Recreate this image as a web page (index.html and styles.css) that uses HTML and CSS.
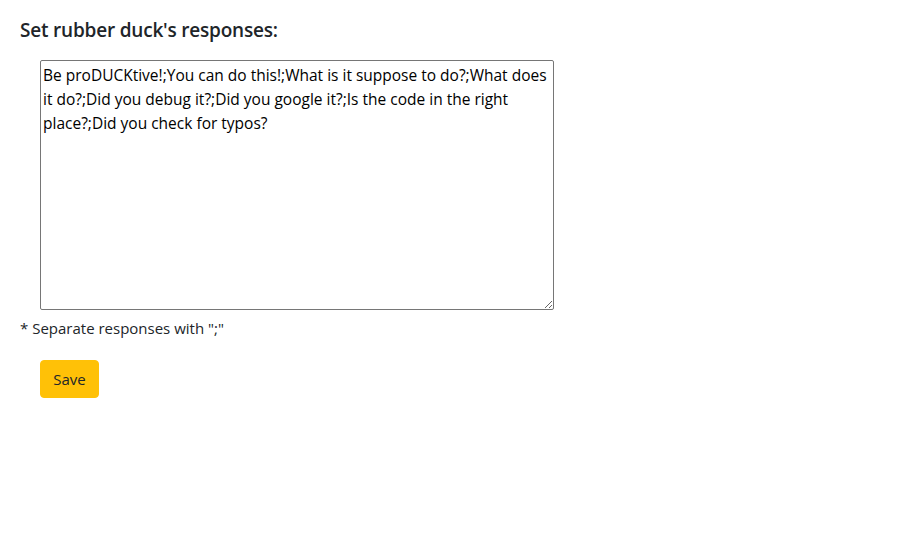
FILE: index.html
```html
<!DOCTYPE html>
<html>
<head>
<meta charset="utf-8">
<link rel="stylesheet" href="styles.css">
</head>
<body>
<div class="page">
  <h5 class="title">Set rubber duck's responses:</h5>
  <div class="field">
    <textarea class="responses">Be proDUCKtive!;You can do this!;What is it suppose to do?;What does it do?;Did you debug it?;Did you google it?;Is the code in the right place?;Did you check for typos?</textarea>
  </div>
  <p class="hint">* Separate responses with ";"</p>
  <div class="actions">
    <button class="save">Save</button>
  </div>
</div>
</body>
</html>
```
FILE: styles.css
```css
html, body {
  margin: 0;
  padding: 0;
  background: #fff;
}
body {
  font-family: "Open Sans", sans-serif;
  color: #212529;
  font-size: 16px;
}
.page {
  padding: 18px 20px;
}
.title {
  margin: 0 0 18px 0;
  font-size: 19px;
  font-weight: 600;
  line-height: 24px;
  letter-spacing: -0.2px;
}
.field {
  padding-left: 20px;
}
.responses {
  display: block;
  box-sizing: border-box;
  width: 514px;
  height: 250px;
  margin: 0;
  padding: 2px 2px;
  border: 1px solid #767676;
  border-radius: 2px;
  font-family: "Open Sans", sans-serif;
  font-size: 15.5px;
  line-height: 24px;
  color: #000;
  resize: both;
}
.hint {
  margin: 6px 0 0 0;
  line-height: 24px;
  font-size: 15px;
}
.actions {
  padding: 20px 0 0 20px;
}
.save {
  background: #ffc107;
  border: 1px solid #ffc107;
  border-radius: 4px;
  color: #212529;
  font-family: "Open Sans", sans-serif;
  font-size: 15px;
  line-height: 24px;
  padding: 6px 12px;
  height: 38px;
  width: 59px;
}
```
